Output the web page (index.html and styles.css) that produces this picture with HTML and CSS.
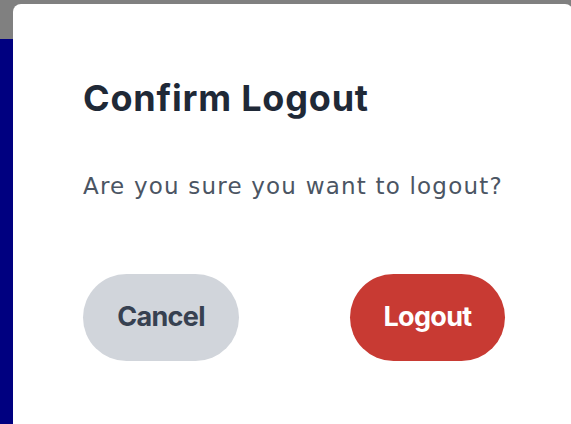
FILE: index.html
```html
<!DOCTYPE html>
<html lang="en">
<head>
<meta charset="utf-8">
<title>Confirm Logout</title>
<link rel="stylesheet" href="styles.css">
</head>
<body>
<div class="page">
  <div class="side"></div>
  <div class="modal">
    <h2 class="title">Confirm Logout</h2>
    <p class="message">Are you sure you want to logout?</p>
    <div class="actions">
      <button class="btn btn-cancel" type="button">Cancel</button>
      <button class="btn btn-logout" type="button">Logout</button>
    </div>
  </div>
</div>
</body>
</html>
```

FILE: styles.css
```css
html, body {
  margin: 0;
  padding: 0;
  height: 100%;
  overflow: hidden;
}
body {
  background: #808080;
  font-family: "Inter", "Liberation Sans", sans-serif;
}
.page {
  display: flex;
  height: 100%;
  width: 580px;
}
.side {
  width: 13px;
  flex: none;
  margin-top: 39px;
  background: #000080;
}
.modal {
  flex: none;
  width: 560px;
  margin-top: 4px;
  background: #ffffff;
  border-radius: 8px 8px 0 0;
  padding: 72.5px 68px 0 70px;
  box-sizing: border-box;
}
.title {
  margin: 0;
  font-size: 36px;
  line-height: 1.2;
  font-weight: 700;
  letter-spacing: 0.8px;
  color: #1f2937;
}
.message {
  margin: 53px 0 0;
  font-family: "DejaVu Sans", "Inter", sans-serif;
  font-size: 23px;
  line-height: 27.6px;
  letter-spacing: 1.2px;
  color: #4b5563;
}
.actions {
  margin-top: 73.5px;
  display: flex;
  justify-content: space-between;
}
.btn {
  border: none;
  height: 87px;
  width: 156px;
  border-radius: 44px;
  font-family: inherit;
  font-size: 27px;
  line-height: 1.2;
  font-weight: 700;
  letter-spacing: -0.7px;
  padding: 0;
}
.btn-cancel {
  background: #d1d5db;
  color: #374151;
}
.btn-logout {
  width: 155px;
  background: #c83a33;
  color: #ffffff;
}
```
